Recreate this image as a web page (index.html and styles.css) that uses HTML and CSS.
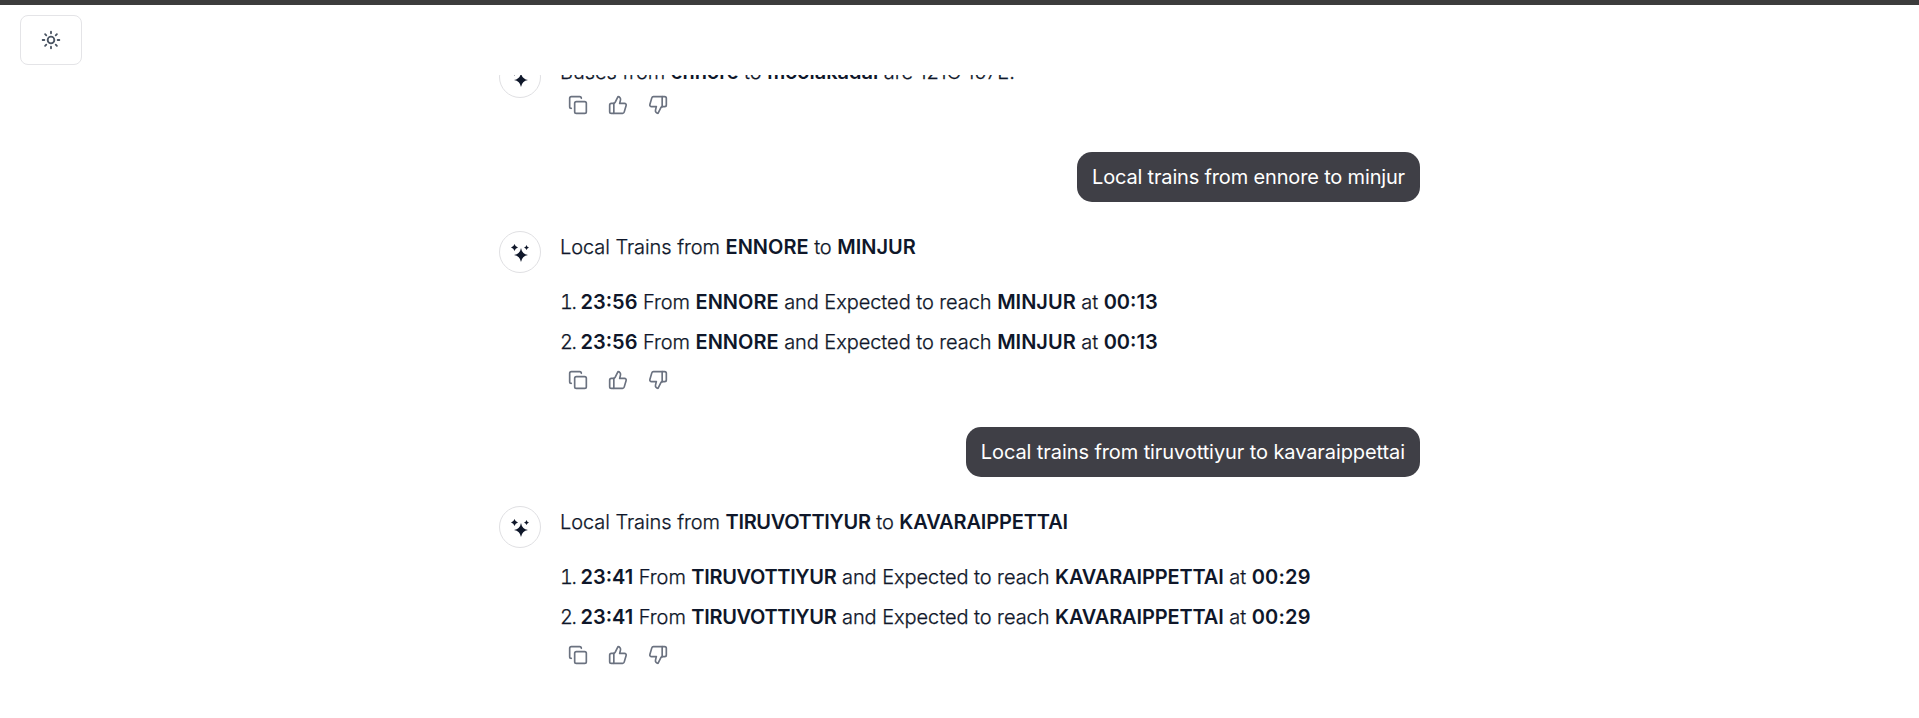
FILE: index.html
```
<!DOCTYPE html>
<html lang="en">
<head>
<meta charset="utf-8">
<title>Chat</title>
<link rel="stylesheet" href="styles.css">
</head>
<body>
<svg class="sprite" aria-hidden="true">
  <symbol id="sparkles" viewBox="0 0 20 20">
    <path d="M11 6Q12 12 18 13Q12 14 11 20Q10 14 4 13Q10 12 11 6Z"/>
    <path d="M4.500 2Q5.200 4.800 8 5.500Q5.200 6.200 4.500 9Q3.800 6.200 1 5.500Q3.800 4.800 4.500 2Z"/>
    <path d="M16.500 3Q17 5 19 5.500Q17 6 16.500 8Q16 6 14 5.500Q16 5 16.500 3Z"/>
  </symbol>
  <symbol id="copy" viewBox="0 0 24 24">
    <rect x="8" y="8" width="14" height="14" rx="2"/>
    <path d="M4 16c-1.1 0-2-.9-2-2V4c0-1.100.9-2 2-2h10c1.100 0 2 .9 2 2"/>
  </symbol>
  <symbol id="up" viewBox="0 0 24 24">
    <path d="M7 10v12"/>
    <path d="M15 5.880 14 10h5.830a2 2 0 0 1 1.920 2.560l-2.330 8A2 2 0 0 1 17.500 22H4a2 2 0 0 1-2-2v-8a2 2 0 0 1 2-2h2.760a2 2 0 0 0 1.790-1.110L12 2a3.130 3.130 0 0 1 3 3.880Z"/>
  </symbol>
  <symbol id="down" viewBox="0 0 24 24">
    <path d="M17 14V2"/>
    <path d="M9 18.120 10 14H4.170a2 2 0 0 1-1.920-2.560l2.330-8A2 2 0 0 1 6.500 2H20a2 2 0 0 1 2 2v8a2 2 0 0 1-2 2h-2.760a2 2 0 0 0-1.790 1.110L12 22a3.130 3.130 0 0 1-3-3.880Z"/>
  </symbol>
</svg>
<div class="topbar"></div>
<header class="header">
  <button class="theme" aria-label="Toggle theme">
    <svg class="icon sun" viewBox="0 0 24 24"><circle cx="12" cy="12" r="4"/><path d="M12 2v2M12 20v2M4.930 4.930l1.410 1.410M17.660 17.660l1.410 1.410M2 12h2M20 12h2M6.340 17.660l-1.410 1.410M19.070 4.930l-1.410 1.410"/></svg>
  </button>
</header>
<main class="scroll">
  <div class="thread">
    <section class="reply">
      <div class="avatar"><svg class="spark"><use href="#sparkles"/></svg></div>
      <div class="body">
        <p>Buses from <b>ennore</b> to <b>moolakadai</b> are 121C 157E.</p>
        <div class="actions"><svg class="icon"><use href="#copy"/></svg><svg class="icon"><use href="#up"/></svg><svg class="icon"><use href="#down"/></svg></div>
      </div>
    </section>
    <div class="bubble short">Local trains from ennore to minjur</div>
    <section class="reply">
      <div class="avatar"><svg class="spark"><use href="#sparkles"/></svg></div>
      <div class="body">
        <p>Local Trains from <b>ENNORE</b> to <b>MINJUR</b></p>
        <div class="list">
          <div class="row"><span class="num">1.</span><b>23:56</b> From <b>ENNORE</b> and Expected to reach <b>MINJUR</b> at <b>00:13</b></div>
          <div class="row"><span class="num">2.</span><b>23:56</b> From <b>ENNORE</b> and Expected to reach <b>MINJUR</b> at <b>00:13</b></div>
        </div>
        <div class="actions"><svg class="icon"><use href="#copy"/></svg><svg class="icon"><use href="#up"/></svg><svg class="icon"><use href="#down"/></svg></div>
      </div>
    </section>
    <div class="bubble">Local trains from tiruvottiyur to kavaraippettai</div>
    <section class="reply">
      <div class="avatar"><svg class="spark"><use href="#sparkles"/></svg></div>
      <div class="body">
        <p>Local Trains from <b class="tight">TIRUVOTTIYUR</b> to <b class="snug">KAVARAIPPETTAI</b></p>
        <div class="list">
          <div class="row"><span class="num">1.</span><b>23:41</b> From <b class="tight">TIRUVOTTIYUR</b> and Expected to reach <b class="snug">KAVARAIPPETTAI</b> at <b class="wide">00:29</b></div>
          <div class="row"><span class="num">2.</span><b>23:41</b> From <b class="tight">TIRUVOTTIYUR</b> and Expected to reach <b class="snug">KAVARAIPPETTAI</b> at <b class="wide">00:29</b></div>
        </div>
        <div class="actions"><svg class="icon"><use href="#copy"/></svg><svg class="icon"><use href="#up"/></svg><svg class="icon"><use href="#down"/></svg></div>
      </div>
    </section>
  </div>
</main>
</body>
</html>
```
FILE: styles.css
```
* { box-sizing: border-box; }
body {
  margin: 0;
  height: 718px;
  overflow: hidden;
  display: flex;
  flex-direction: column;
  background: #fff;
  color: #0f172a;
  font: 300 20px/30px Inter, "Liberation Sans", sans-serif;
  letter-spacing: -0.06px;
}
p { margin: 0; }
p, .row { -webkit-text-stroke: 0.25px currentColor; }
b { font-weight: 600; letter-spacing: 0; -webkit-text-stroke: 0; }
.sprite { display: none; }
.topbar { flex: none; height: 5px; background: #3c3c3c; }
.header { flex: none; height: 70px; padding: 10px 20px; }
.theme {
  display: flex;
  align-items: center;
  justify-content: center;
  width: 62px;
  height: 50px;
  padding: 0;
  background: #fff;
  border: 1px solid #e4e4e7;
  border-radius: 8px;
}
.icon {
  display: block;
  width: 20px;
  height: 20px;
  fill: none;
  stroke: #6b7280;
  stroke-width: 2;
  stroke-linecap: round;
  stroke-linejoin: round;
}
.sun { stroke: #4b5563; stroke-width: 2.2; }
.scroll { flex: 1; min-height: 0; overflow: hidden; }
.thread {
  display: flex;
  flex-direction: column;
  width: 921px;
  margin: -19px 0 0 499px;
}
.reply { display: flex; gap: 19px; }
.avatar {
  flex: none;
  display: flex;
  align-items: center;
  justify-content: center;
  width: 42px;
  height: 42px;
  border: 1px solid #e0e0e3;
  border-radius: 50%;
}
.spark { width: 20px; height: 20px; fill: #0f172a; }
.body { flex: 1; padding-top: 1px; white-space: nowrap; }
.list { display: grid; row-gap: 10px; padding: 25px 0 5px; }
.num { display: inline-block; width: 20.5px; letter-spacing: -1.4px; font-variant-numeric: tabular-nums; }
.actions { display: flex; gap: 20px; padding: 8px 8px 0; }
.bubble {
  align-self: flex-end;
  margin: 37px 0 29px;
  padding: 10px 15px;
  border-radius: 15px;
  background: #3f3f46;
  color: #fff;
  font-weight: 400;
  letter-spacing: -0.09px;
}
.short { letter-spacing: -0.165px; }
.tight { letter-spacing: -0.33px; }
.snug { letter-spacing: -0.13px; }
.wide { letter-spacing: 0.2px; }
```
